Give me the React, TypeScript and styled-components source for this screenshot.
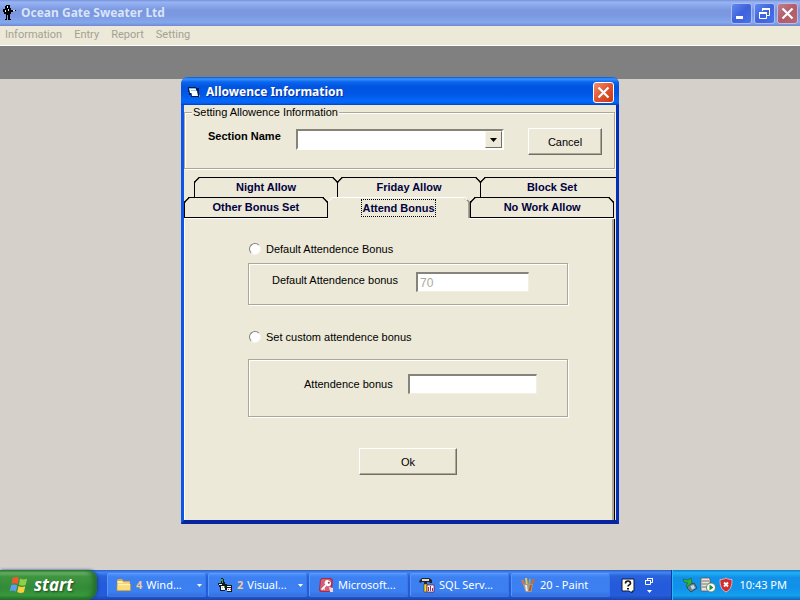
import React from "react";
import styled, { createGlobalStyle, css } from "styled-components";

const FACE = "#ece9d8";
const UI = '"Liberation Sans", Arial, sans-serif';
const SHELL = '"Noto Sans", Tahoma, sans-serif';
const CAPTION = '"Noto Sans", "Trebuchet MS", sans-serif';

const GlobalStyle = createGlobalStyle`
  *, *::before, *::after { box-sizing: border-box; }
  body { margin: 0; background: #d5d0ca; font: 11px/14px ${UI}; color: #000; }
  button, input, select { font: inherit; color: inherit; }
`;

const Desktop = styled.div`
  display: flex;
  flex-direction: column;
  min-height: 100vh;
  overflow: hidden;
`;

const AppBar = styled.header`
  display: flex;
  align-items: center;
  gap: 5px;
  height: 26px;
  padding: 0 2px;
  background: linear-gradient(#7690dd 0, #98b4f0 8%, #8dabee 18%, #7a97df 40%, #7b98e1 60%, #83a8ec 86%, #7c97e0 94%, #7286cf 100%);
`;

const AppTitle = styled.h1`
  flex: 1;
  margin: 0;
  font: bold 12px/16px ${CAPTION};
  color: #d8e4f8;
`;

const CaptionButtons = styled.div`
  display: flex;
  gap: 2px;
`;

const captionTones = {
  dimBlue: css`border-color: #a9bdf5; background: linear-gradient(135deg, #6188f0, #3f62dc 50%, #4772e8);`,
  dimRed: css`border-color: #c5b9dd; background: linear-gradient(135deg, #c07f90, #b15c68 50%, #b56872);`,
  red: css`border-color: #fff; background: linear-gradient(135deg, #f0906f, #e0532f 50%, #c83a12);`,
};

const CaptionButton = styled.button<{ $tone: keyof typeof captionTones }>`
  display: grid;
  place-items: center;
  width: 21px;
  height: 21px;
  padding: 0;
  border: 1px solid;
  border-radius: 3px;
  ${(p) => captionTones[p.$tone]}
`;

const MenuBar = styled.nav`
  display: flex;
  gap: 12px;
  height: 20px;
  padding: 1px 5px 3px;
  background: ${FACE};
  border-bottom: 1px solid #fff;
`;

const MenuItem = styled.button`
  padding: 0;
  border: 0;
  background: none;
  font: 11px/14px Roboto, ${SHELL};
  color: #a5a191;
`;

const ToolStrip = styled.div`
  height: 33px;
  background: #808080;
`;

const Workspace = styled.main`
  display: flex;
  flex: 1;
  justify-content: center;
  align-items: flex-start;
`;

const Dialog = styled.section`
  width: 438px;
  margin: -2px 0 16px;
  border: 3px solid #0a3fd0;
  border-top: 0;
  border-bottom: 4px solid #0624a0;
  border-left-color: #0d55e6;
  border-right-color: #0430b8;
  border-radius: 7px 7px 0 0;
  background: ${FACE};
`;

const DialogBar = styled.header`
  display: flex;
  align-items: center;
  gap: 5px;
  height: 28px;
  margin: 0 -3px;
  padding: 2px 5px 0 7px;
  border-radius: 7px 7px 0 0;
  background: linear-gradient(#0a55d8 0, #3a93ff 7%, #0a66ee 18%, #0054e0 35%, #0056e6 60%, #0368fb 85%, #0362f2 93%, #0040c0 100%);
`;

const DialogTitle = styled.h2`
  flex: 1;
  margin: 0;
  font: bold 12px/16px ${CAPTION};
  color: #fff;
  text-shadow: 1px 1px 0 #0a2f98;
`;

const frame = css`
  border: 1px solid #aca899;
  box-shadow: 1px 1px 0 #fff, inset 1px 1px 0 #fff;
`;

const SectionGroup = styled.fieldset`
  ${frame}
  height: 64px;
  min-width: 0;
  margin: 0 1px 0 0;
  padding: 0;
`;

const SectionLegend = styled.legend`
  margin-left: 7px;
  padding: 0 1px;
  line-height: 14px;
  background: ${FACE};
`;

const SectionRow = styled.div`
  display: flex;
  align-items: flex-start;
  padding: 9px 12px 0 23px;
`;

const SectionLabel = styled.label`
  width: 88px;
  line-height: 16px;
  font-weight: bold;
`;

const Combo = styled.div`
  display: grid;
  flex: 1;
  height: 21px;
  margin-top: 1px;
  border: 2px solid;
  border-color: #85837a #fff #fff #85837a;
  background: #fff;
`;

const ComboSelect = styled.select`
  grid-area: 1 / 1;
  width: 100%;
  padding: 0 20px 0 3px;
  border: 0;
  appearance: none;
  background: #fff;
`;

const ComboArrow = styled.span`
  display: grid;
  grid-area: 1 / 1;
  place-items: center;
  justify-self: end;
  width: 17px;
  border: 1px solid;
  border-color: #f8f6ea #716f64 #716f64 #f8f6ea;
  background: ${FACE};
  pointer-events: none;
`;

const PushButton = styled.button<{ $wide?: boolean }>`
  width: ${(p) => (p.$wide ? 98 : 74)}px;
  height: 27px;
  padding: 0;
  border: 1px solid;
  border-color: #fff #716f64 #716f64 #fff;
  box-shadow: inset -1px -1px 0 #aca899;
  background: ${FACE};
`;

const CancelSlot = styled.div`
  margin-left: 24px;
`;

const Tabs = styled.div`
  margin-top: 8px;
  padding-bottom: 1px;
  overflow: hidden;
`;

const TabRow = styled.div<{ $back?: boolean }>`
  display: flex;
  height: ${(p) => (p.$back ? 20 : 21)}px;
  margin: ${(p) => (p.$back ? "0 -7px 0 10px" : "0 3px 0 0")};
`;

const Tab = styled.button<{ $front?: boolean; $active?: boolean }>`
  flex: 1;
  margin-right: -1px;
  padding: 0 0 2px;
  border: 1px solid #000;
  border-bottom-width: ${(p) => (p.$front && !p.$active ? 1 : 0)}px;
  border-radius: 5px 5px 0 0;
  corner-shape: bevel;
  background: ${FACE};
  font-weight: bold;
  line-height: 16px;
  color: #000040;
  ${(p) =>
    p.$front &&
    !p.$active &&
    css`
      z-index: 1;
      box-shadow: 0 1px 0 #fff;
    `}
  ${(p) =>
    p.$active &&
    css`
      margin-right: 0;
      padding: 0;
      border-color: #fff #85837a transparent #fff;
      box-shadow: inset -1px 0 0 #aca899;
    `}
`;

const TabText = styled.span<{ $focus?: boolean }>`
  display: inline-block;
  outline: ${(p) => (p.$focus ? "1px dotted #000" : "none")};
`;

const Panel = styled.form`
  display: flex;
  flex-direction: column;
  margin-right: 1px;
  padding: 23px 46px 45px 63px;
  border: solid;
  border-width: 0 1px 0 1px;
  border-color: #fff #000 #fff #fff;
  box-shadow: inset -2px 0 0 #aca899;
`;

const Choice = styled.label`
  display: flex;
  align-items: center;
  gap: 5px;
  height: 14px;
  padding-left: 1px;
`;

const Radio = styled.input`
  width: 12px;
  height: 12px;
  margin: 0;
  appearance: none;
  border: 1px solid;
  border-color: #85837a #f6f4ea #f6f4ea #85837a;
  border-radius: 50%;
  background: #fff;
  &:checked {
    background: radial-gradient(#000 2px, #fff 3px);
  }
`;

const Group = styled.div<{ $tall?: boolean }>`
  ${frame}
  display: flex;
  align-items: flex-start;
  height: ${(p) => (p.$tall ? 58 : 42)}px;
  margin: ${(p) => (p.$tall ? "15px 0 31px" : "7px 0 25px")};
  padding: ${(p) => (p.$tall ? "14px 30px 0 55px" : "8px 38px 0 23px")};
`;

const FieldLabel = styled.label<{ $long?: boolean }>`
  width: ${(p) => (p.$long ? 144 : 104)}px;
  line-height: ${(p) => (p.$long ? 16 : 20)}px;
`;

const TextField = styled.input`
  flex: 1;
  min-width: 0;
  height: 20px;
  padding: 0 2px;
  border: solid;
  border-width: 2px 1px 1px 2px;
  border-color: #85837a #f1efe2 #f1efe2 #85837a;
  outline: 0;
  background: #fff;
  font-size: 12px;
  &:disabled {
    color: #aca899;
  }
`;

const Actions = styled.div`
  display: flex;
  justify-content: center;
`;

const Taskbar = styled.footer`
  display: flex;
  height: 30px;
  background: linear-gradient(#2a5cc8 0, #4187f0 8%, #2a62dc 20%, #245adb 50%, #245cdc 85%, #1b44a8 100%);
  color: #fff;
  font: 11px/14px ${SHELL};
`;

const StartButton = styled.button`
  display: flex;
  align-items: center;
  gap: 5px;
  width: 97px;
  padding: 0 0 1px 9px;
  border: 0;
  border-radius: 0 9px 11px 0;
  background: linear-gradient(#2f7f32 0, #6cb468 9%, #3f9440 22%, #338a37 60%, #379a3c 85%, #266b2a 100%);
  box-shadow: inset -4px 0 5px #246c2e, 1px 0 3px #173f9c;
  font: italic bold 17px/20px ${CAPTION};
  color: #fff;
  text-shadow: 1px 1px 2px #1d4a1d;
`;

const TaskList = styled.div`
  display: flex;
  flex: 1;
  gap: 2px;
  min-width: 0;
  padding: 3px 0 3px 10px;
`;

const TaskButton = styled.button`
  display: flex;
  flex: 1 1 0;
  align-items: center;
  gap: 4px;
  min-width: 0;
  padding: 0 3px 0 8px;
  border: 1px solid #3a78ea;
  border-top-color: #5f9cf8;
  border-left-color: #5a96f6;
  border-radius: 2px;
  background: linear-gradient(#4f8ff8 0, #3c80f2 15%, #3b7ff1 80%, #3570e0 100%);
  color: #fff;
  text-align: left;
`;

const TaskText = styled.span`
  flex: 1;
  overflow: hidden;
  white-space: nowrap;
`;

const TaskCount = styled.b`
  color: #f2c998;
`;

const LanguageArea = styled.div`
  display: flex;
  align-items: center;
  gap: 10px;
  width: 61px;
  padding-left: 11px;
`;

const LanguageStack = styled.div`
  display: grid;
  justify-items: center;
  gap: 5px;
`;

const Tray = styled.div`
  display: flex;
  align-items: center;
  gap: 2px;
  width: 129px;
  padding: 0 13px 0 10px;
  border-left: 1px solid #0b3a9c;
  background: linear-gradient(#0f78c8 0, #1fb0f6 9%, #1290e8 25%, #1092ea 60%, #14a0f0 85%, #0c66b8 100%);
  box-shadow: inset 1px 0 0 #2bb8f8;
`;

const Clock = styled.time`
  flex: 1;
  text-align: right;
  white-space: nowrap;
`;

const Glyph = styled.svg`
  display: block;
  flex: none;
`;

type IconProps = { w?: number; h?: number; vb?: string; children: React.ReactNode };
const Icon = ({ w = 16, h = 16, vb, children }: IconProps) => (
  <Glyph width={w} height={h} viewBox={vb ?? `0 0 ${w} ${h}`} aria-hidden="true">
    {children}
  </Glyph>
);

const ShooterIcon = () => (
  <Icon w={14} h={16}>
    <path d="M4 0h4v3h1v2h5v1h-3v1H9v2h-1v5h1v1H6v-5H5v5H3v-1h1V9H2V7H1V4h2V1h1z" fill="#000" />
    <path d="M5 1h1v2H5zM3 5h1v2H3zM6 4h1v2H6zM11 5h2v1h-2z" fill="#e8ecf8" />
  </Icon>
);

const MinimizeIcon = () => (
  <Icon w={13} h={13}>
    <path d="M1 9h7v3H1z" fill="#fff" />
  </Icon>
);

const RestoreIcon = () => (
  <Icon w={13} h={13}>
    <path d="M4.500 4V2.500h7V8.500H9" fill="none" stroke="#fff" />
    <path d="M4 1h8v2H4z" fill="#fff" />
    <path d="M1.500 5.500h7v6h-7z" fill="none" stroke="#fff" />
    <path d="M1 5h8v2H1z" fill="#fff" />
  </Icon>
);

const CloseIcon = () => (
  <Icon w={13} h={13}>
    <path d="M1.500 1.500l10 10M11.500 1.500l-10 10" stroke="#fff" strokeWidth="2.200" />
  </Icon>
);

const FormIcon = () => (
  <Icon w={13} h={12}>
    <path d="M0 1h8v1h3v9H3V9H1V6H0z" fill="#001a50" />
    <path d="M1 2h6l1 1v4H2z" fill="#fff" />
    <path d="M1 2h6v1H1z" fill="#6cc8e8" />
    <path d="M3 5h6l1 5H4z" fill="#fff" />
    <path d="M3 4h5l1 1H3z" fill="#8cd4f0" />
    <path d="M11 9h1v2h-1z" fill="#b08850" />
  </Icon>
);

const ArrowIcon = ({ color }: { color: string }) => (
  <Icon w={7} h={4}>
    <path d="M0 0h7L3.500 4z" fill={color} />
  </Icon>
);

const WindowsFlag = () => (
  <Icon w={20} h={20} vb="0 0 18 18">
    <path d="M3.500 2.500c2-1 3.500-1 5.500.300L7.800 8.400C6 7.200 4.300 7.200 2.200 8.100z" fill="#ee5a2c" />
    <path d="M10 3.200c2 1.100 4 1.100 6.300.100L15 9c-2.200 1-4 .800-6-.300z" fill="#8bd14c" />
    <path d="M1.900 9.200c2-.900 3.700-.9 5.600.300L6.200 15c-1.800-1.200-3.500-1.200-5.600-.300z" fill="#5c9df0" />
    <path d="M8.600 9.900c2 1.100 3.900 1.100 6.100.200l-1.300 5.500c-2.200 1-4 .9-6-.200z" fill="#fbce3c" />
  </Icon>
);

const FolderIcon = () => (
  <Icon>
    <path d="M1 3.500L2 2h4l1.500 2H14v10H1z" fill="#e0a93c" />
    <path d="M1.500 4H6l1.500 1.500h6V7h-12z" fill="#fff3b0" />
    <path d="M1 13.500V7h13.500v6.500z" fill="#fbdc78" stroke="#c98e2c" strokeWidth=".6" />
    <path d="M2 7.600h12" stroke="#fff6c4" />
  </Icon>
);

const VisualIcon = () => (
  <Icon>
    <path d="M4 1h2v1h1v3h1v2h2v1h5v7h-5v-2H8v1H3v-4H2V8H1V6h3z" fill="#101820" />
    <path d="M2 7h3v1H2zM4 9h4v4H4zM10 9h4v1h-4zM10 11h4v3h-4z" fill="#f2f6ff" />
    <path d="M4 2h2v2H4zM5 4h1v2H5zM7 9h1v2H7z" fill="#35a04a" />
    <path d="M11 12h1v1h-1zM13 12h1v1h-1z" fill="#d04050" />
    <path d="M5 10h1v1H5z" fill="#d8b030" />
  </Icon>
);

const AccessIcon = () => (
  <Icon>
    <path d="M3.500 1H13l2 2-1 10-2 2H2l-1-2 1-10z" fill="#a82c48" />
    <path d="M4 2h8l1.500 1.500-1 9L11 14H3l-1-1.500L3 3z" fill="#cf6078" />
    <path d="M8 8.200L3.600 12.600" stroke="#fff" strokeWidth="1.800" />
    <path d="M5.200 11l1.600 1.600" stroke="#fff" strokeWidth="1.300" />
    <ellipse cx="9.800" cy="6.200" rx="3.300" ry="2.700" transform="rotate(35 9.800 6.200)" fill="#fff" />
    <circle cx="10.800" cy="5.800" r="1" fill="#a82c48" />
    <path d="M11 10l4 1v4h-3z" fill="#f1d6de" />
  </Icon>
);

const SqlIcon = () => (
  <Icon>
    <path d="M0 4l3-3h7l3 2v3h-2l-1-1H8v2H5V5H3L1 6z" fill="#252525" />
    <path d="M3 2h7v2H3z" fill="#d8dcdf" />
    <path d="M5 7h3v8H5z" fill="#f7d832" stroke="#4a3b00" strokeWidth=".6" />
    <path d="M8 8h7v7H8z" fill="#fff" stroke="#702048" strokeWidth=".8" />
    <path d="M9.500 10v4M11.500 9v5M13.500 11v3" stroke="#a0285c" />
  </Icon>
);

const PaintIcon = () => (
  <Icon>
    <path d="M5 9L2 3" stroke="#e07048" strokeWidth="2.200" />
    <path d="M7 9L6 1" stroke="#f0c83c" strokeWidth="2" />
    <path d="M9 9l1-7" stroke="#98a868" strokeWidth="1.800" />
    <path d="M11 9l3-7" stroke="#c86c34" strokeWidth="2.200" />
    <path d="M3 7h10l-1.500 8h-6z" fill="#a8988c" />
    <path d="M5 8h2l.8 6H6z" fill="#e4edf0" />
    <path d="M9.500 14l1.500-6" stroke="#b05a28" strokeWidth="1.800" />
  </Icon>
);

const HelpIcon = () => (
  <Icon w={14} h={15}>
    <path d="M1 1h12v12h-2v2l-3-2H1z" fill="#fffff0" stroke="#0c1440" />
    <path d="M4.500 5.500c0-3.300 5-3.300 5 0 0 1.400-2.500 1.500-2.500 3" fill="none" stroke="#101020" strokeWidth="1.600" />
    <path d="M6 10h2v1.500H6z" fill="#101020" />
  </Icon>
);

const SmallRestoreIcon = () => (
  <Icon w={8} h={7}>
    <path d="M2.500 2V.500h5v4H6M.500 2.500h5v4h-5z" fill="none" stroke="#fff" />
    <path d="M2 0h6v1H2zM0 2h6v1H0z" fill="#fff" />
  </Icon>
);

const SmallArrowIcon = () => (
  <Icon w={5} h={3}>
    <path d="M0 0h5L2.500 3z" fill="#fff" />
  </Icon>
);

const DeviceIcon = () => (
  <Icon>
    <path d="M6 8l6-2 3 5-6 4-4-4z" fill="#6c8590" stroke="#26404c" strokeWidth=".8" />
    <path d="M8.500 9l3-1 1.500 3-3 1.500z" fill="#c6dce4" />
    <path d="M1 2l5 1 3-2 1 5-5 4-1-1 2-3-4-1z" fill="#2fb43c" stroke="#14631f" strokeWidth=".6" />
  </Icon>
);

const ServerIcon = () => (
  <Icon>
    <path d="M1 1h8l1 1v12H1z" fill="#e6e3d8" stroke="#5c5c58" strokeWidth=".8" />
    <path d="M2 4h7M2 7h7M2 10h5" stroke="#77756e" />
    <circle cx="11" cy="10.500" r="4.500" fill="#fff" stroke="#4c6a54" strokeWidth=".8" />
    <path d="M9.500 7.500v6l4-3z" fill="#18962c" />
  </Icon>
);

const ShieldIcon = () => (
  <Icon>
    <path d="M8 1c2 1.300 4 1.500 6 1.500 0 6-1 10-6 12.500-5-2.500-6-6.500-6-12.500 2 0 4-.2 6-1.500z" fill="#d42c2c" stroke="#f0c4c0" strokeWidth=".8" />
    <path d="M6 5.500l4 4M10 5.500l-4 4" stroke="#fff" strokeWidth="1.800" />
  </Icon>
);

const menus = ["Information", "Entry", "Report", "Setting"];
const backTabs = ["Night Allow", "Friday Allow", "Block Set"];
const frontTabs = ["Other Bonus Set", "Attend Bonus", "No Work Allow"];

const tasks = [
  { icon: <FolderIcon />, count: 4, text: "Wind..." },
  { icon: <VisualIcon />, count: 2, text: "Visual..." },
  { icon: <AccessIcon />, text: "Microsoft..." },
  { icon: <SqlIcon />, text: "SQL Serv..." },
  { icon: <PaintIcon />, text: "20 - Paint" },
];

export default function App() {
  return (
    <Desktop>
      <GlobalStyle />
      <AppBar>
        <ShooterIcon />
        <AppTitle>Ocean Gate Sweater Ltd</AppTitle>
        <CaptionButtons>
          <CaptionButton $tone="dimBlue" aria-label="Minimize"><MinimizeIcon /></CaptionButton>
          <CaptionButton $tone="dimBlue" aria-label="Restore"><RestoreIcon /></CaptionButton>
          <CaptionButton $tone="dimRed" aria-label="Close"><CloseIcon /></CaptionButton>
        </CaptionButtons>
      </AppBar>
      <MenuBar>
        {menus.map((m) => <MenuItem key={m}>{m}</MenuItem>)}
      </MenuBar>
      <ToolStrip />

      <Workspace>
        <Dialog role="dialog" aria-labelledby="dialog-title">
          <DialogBar>
            <FormIcon />
            <DialogTitle id="dialog-title">Allowence Information</DialogTitle>
            <CaptionButton $tone="red" aria-label="Close dialog"><CloseIcon /></CaptionButton>
          </DialogBar>
          <SectionGroup>
            <SectionLegend>Setting Allowence Information</SectionLegend>
            <SectionRow>
              <SectionLabel htmlFor="section">Section Name</SectionLabel>
              <Combo>
                <ComboSelect id="section" defaultValue=""><option value="" /></ComboSelect>
                <ComboArrow><ArrowIcon color="#000" /></ComboArrow>
              </Combo>
              <CancelSlot><PushButton type="button">Cancel</PushButton></CancelSlot>
            </SectionRow>
          </SectionGroup>

          <Tabs role="tablist">
            <TabRow $back>
              {backTabs.map((t) => (
                <Tab key={t} role="tab" aria-selected={false}><TabText>{t}</TabText></Tab>
              ))}
            </TabRow>
            <TabRow>
              {frontTabs.map((t) => {
                const active = t === "Attend Bonus";
                return (
                  <Tab key={t} role="tab" aria-selected={active} $front $active={active}>
                    <TabText $focus={active}>{t}</TabText>
                  </Tab>
                );
              })}
            </TabRow>
          </Tabs>

          <Panel onSubmit={(e) => e.preventDefault()}>
            <Choice><Radio type="radio" name="mode" />Default Attendence Bonus</Choice>
            <Group>
              <FieldLabel $long htmlFor="default-bonus">Default Attendence bonus</FieldLabel>
              <TextField id="default-bonus" defaultValue="70" disabled />
            </Group>
            <Choice><Radio type="radio" name="mode" />Set custom attendence bonus</Choice>
            <Group $tall>
              <FieldLabel htmlFor="custom-bonus">Attendence bonus</FieldLabel>
              <TextField id="custom-bonus" />
            </Group>
            <Actions><PushButton $wide type="submit">Ok</PushButton></Actions>
          </Panel>
        </Dialog>
      </Workspace>

      <Taskbar>
        <StartButton><WindowsFlag />start</StartButton>
        <TaskList>
          {tasks.map((t) => (
            <TaskButton key={t.text}>
              {t.icon}
              {t.count && <TaskCount>{t.count}</TaskCount>}
              <TaskText>{t.text}</TaskText>
              {t.count && <SmallArrowIcon />}
            </TaskButton>
          ))}
        </TaskList>
        <LanguageArea>
          <HelpIcon />
          <LanguageStack><SmallRestoreIcon /><SmallArrowIcon /></LanguageStack>
        </LanguageArea>
        <Tray>
          <DeviceIcon />
          <ServerIcon />
          <ShieldIcon />
          <Clock>10:43 PM</Clock>
        </Tray>
      </Taskbar>
    </Desktop>
  );
}
